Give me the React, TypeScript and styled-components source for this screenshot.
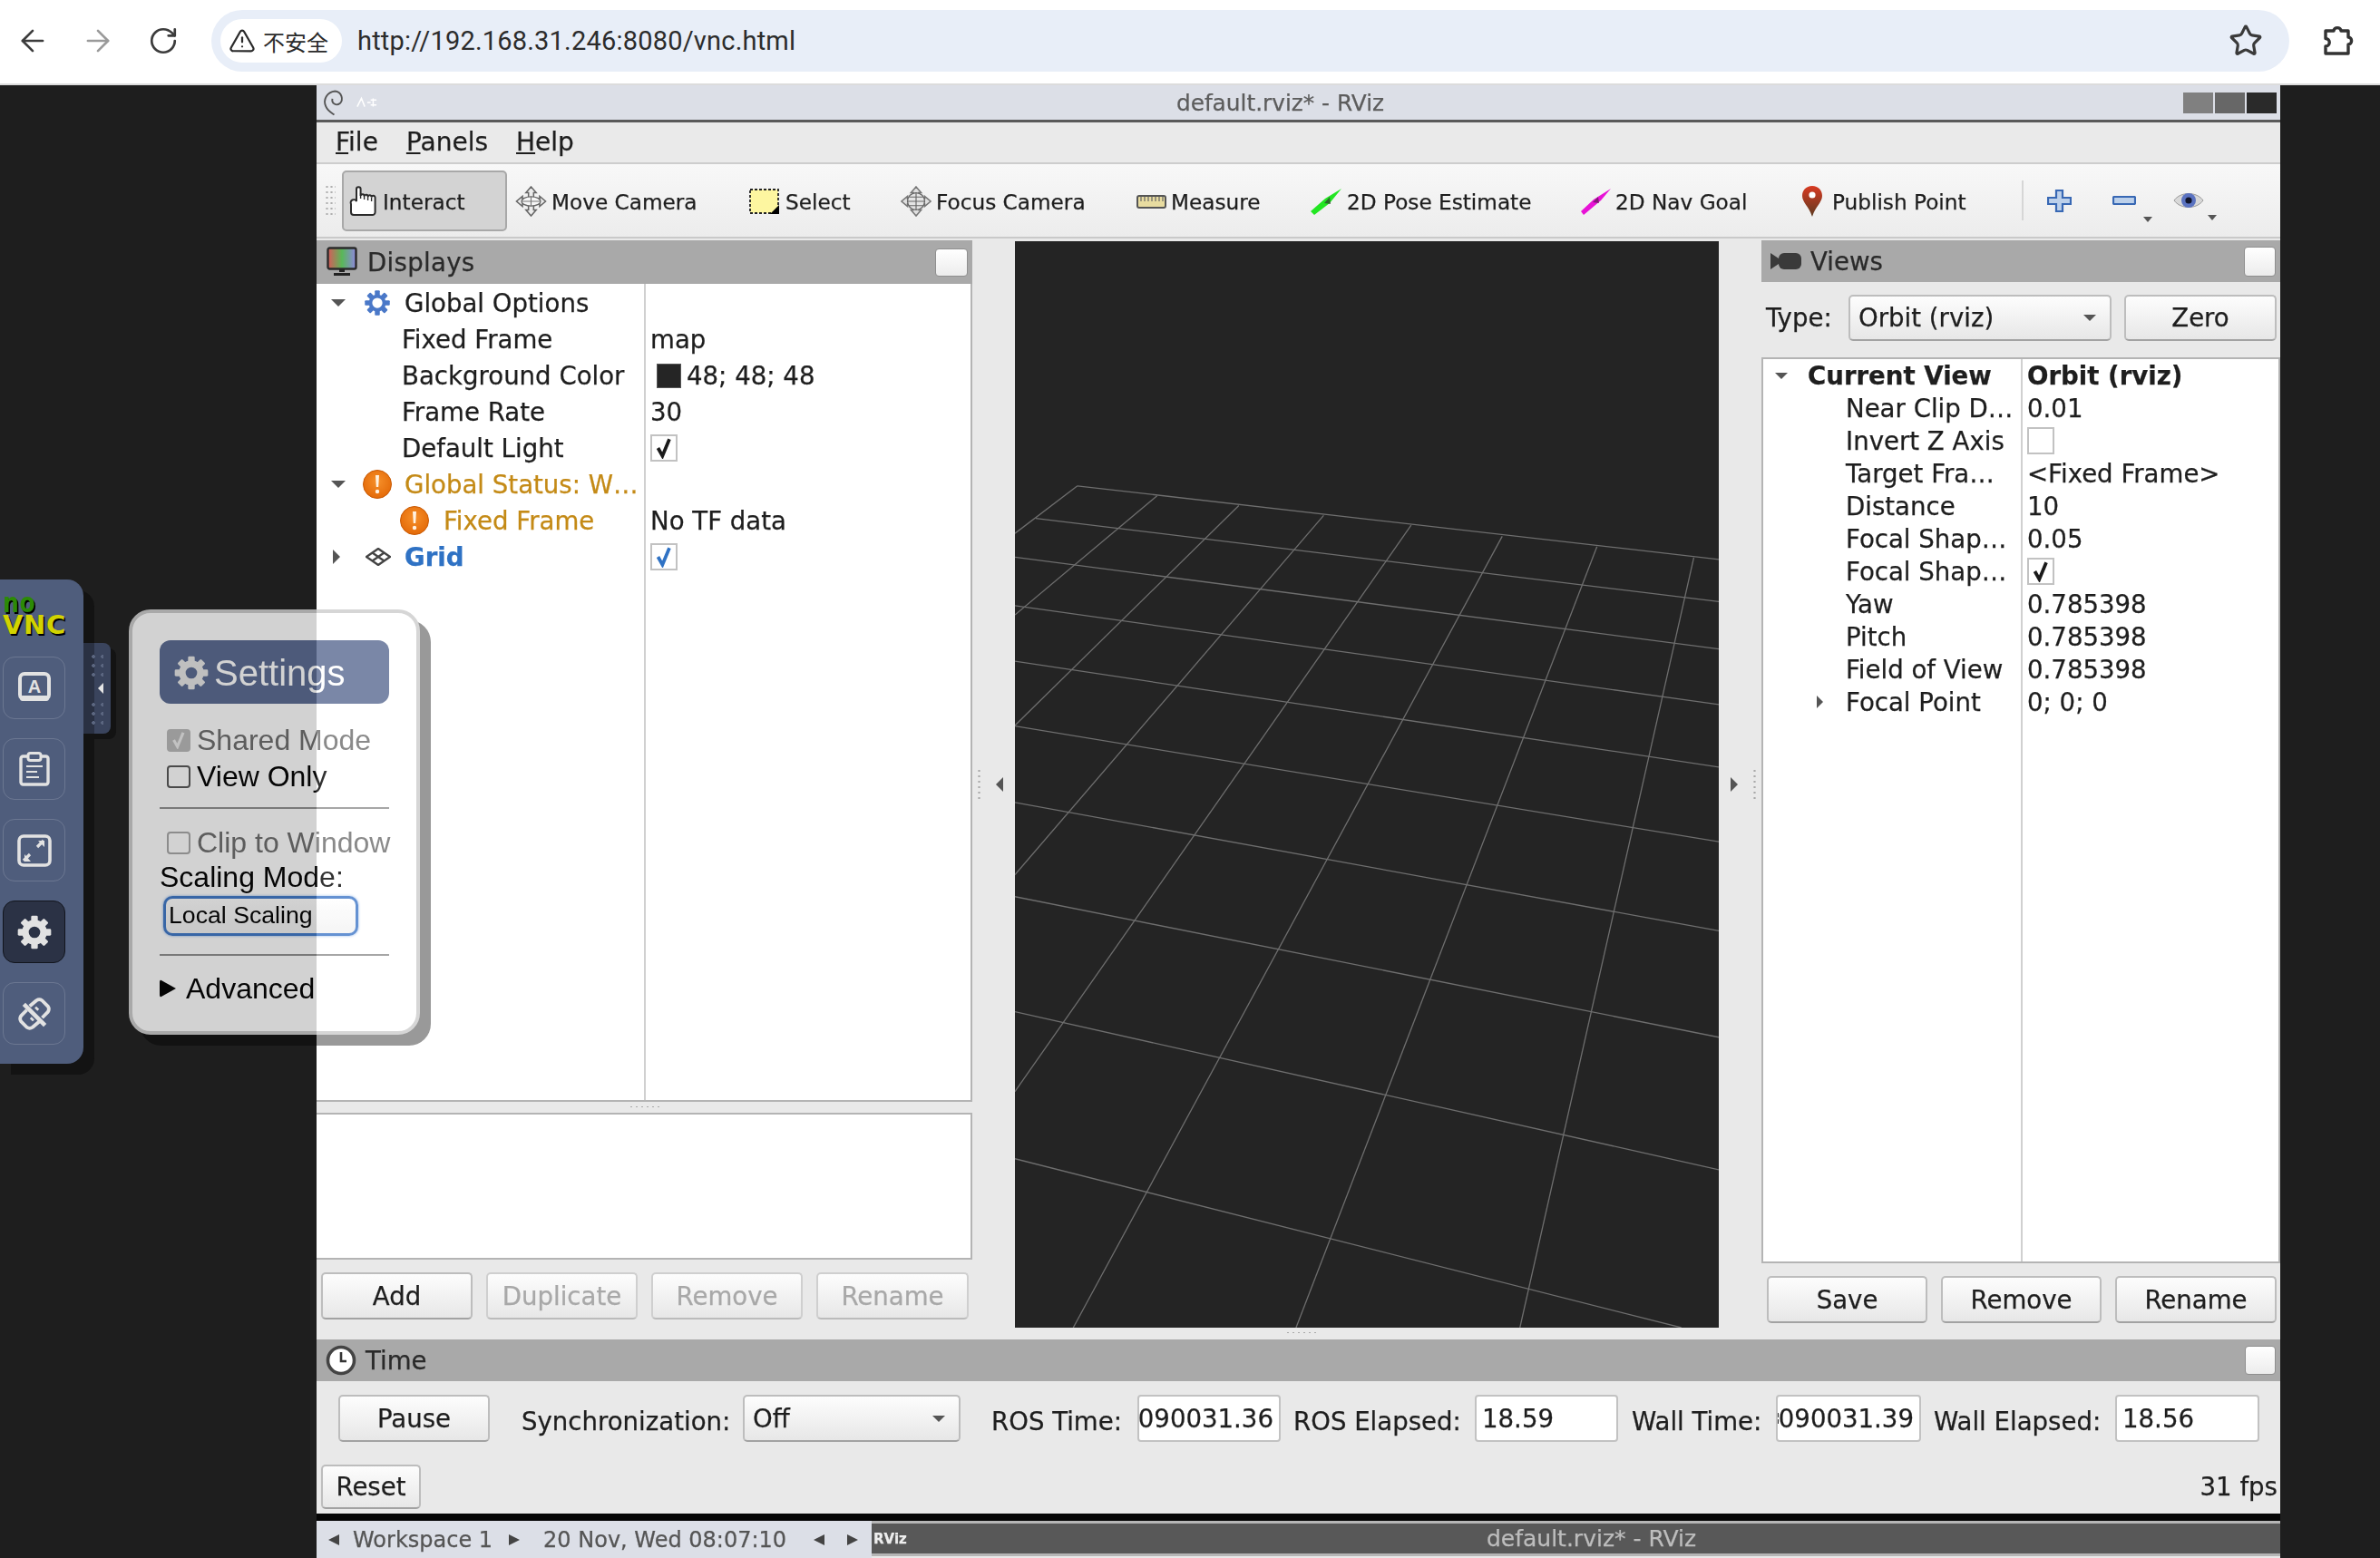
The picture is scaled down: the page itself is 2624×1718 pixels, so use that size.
import React from 'react';
import styled, { createGlobalStyle } from 'styled-components';
import { ArrowLeft, ArrowRight, RotateCw, Star, TriangleAlert } from 'lucide-react';

const GlobalStyle = createGlobalStyle`
  html, body {
    margin: 0;
    background: #1e1e1e;
    width: 2624px;
    height: 1718px;
    overflow: hidden;
  }
  * { box-sizing: border-box; }
`;

const Page = styled.div`
  width: 2624px;
  height: 1718px;
  display: flex;
  flex-direction: column;
`;

/* ---------- browser chrome ---------- */

const BrowserBar = styled.div`
  height: 94px;
  flex: none;
  background: #fff;
  border-bottom: 2px solid #dcdcdc;
  display: flex;
  align-items: center;
  padding-bottom: 2px;
`;

const NavSlot = styled.div<{ $dim?: boolean }>`
  width: 72px;
  display: flex;
  justify-content: center;
  color: ${p => (p.$dim ? '#9a9a9a' : '#3c3c3c')};
`;

const UrlPill = styled.div`
  width: 2291px;
  height: 68px;
  margin-left: 17px;
  border-radius: 34px;
  background: #e8eef8;
  display: flex;
  align-items: center;
  padding-left: 10px;
`;

const SecurityChip = styled.div`
  width: 134px;
  height: 48px;
  border-radius: 24px;
  background: #fff;
  display: flex;
  align-items: center;
  gap: 8px;
  padding-left: 9px;
  color: #2a2a2a;
  font: 24px 'Noto Sans CJK SC', sans-serif;
`;

const UrlText = styled.div`
  margin-left: 17px;
  font: 29px Roboto, sans-serif;
  color: #2c2c2c;
  letter-spacing: 0.2px;
`;

const StarSlot = styled.div`
  margin-left: auto;
  margin-right: 29px;
  color: #3a3a3a;
  display: flex;
`;

const PuzzleSlot = styled.div`
  margin-left: 37px;
  display: flex;
`;

/* ---------- desktop ---------- */

const Desktop = styled.div`
  flex: 1;
  position: relative;
  background: #1e1e1e;
  padding-left: 349px;
`;

const RvizWindow = styled.div`
  width: 2165px;
  height: 1624px;
  background: #e9e9e9;
  display: flex;
  flex-direction: column;
  font: 27.6px 'DejaVu Sans', sans-serif;
  color: #1e1e1e;
  -webkit-text-stroke: 0.25px;
  filter: blur(0.55px);
`;

const TitleBar = styled.div`
  height: 41px;
  flex: none;
  background: #dcdfe7;
  border-bottom: 3px solid #5a5a5a;
  display: flex;
  align-items: center;
`;

const TitleLeft = styled.div`
  width: 67px;
  padding-left: 6px;
  display: flex;
  align-items: center;
  gap: 12px;
`;

const TitleText = styled.div`
  flex: 1;
  text-align: center;
  font-size: 24.8px;
  color: #5c5c5c;
`;

const WindowButtons = styled.div`
  width: 107px;
  display: flex;
  gap: 2px;
`;

const WindowButton = styled.div<{ $c: string }>`
  width: 33px;
  height: 23px;
  background: ${p => p.$c};
`;

const MenuBar = styled.div`
  height: 46px;
  flex: none;
  background: #eaeaea;
  border-bottom: 2px solid #cdcdcd;
  display: flex;
  align-items: center;
  gap: 31px;
  padding: 0 0 2px 21px;
  font-size: 28px;
`;

const ToolBar = styled.div`
  height: 82px;
  flex: none;
  background: linear-gradient(#f8f8f8, #ececec);
  border-bottom: 2px solid #c9c9c9;
  display: flex;
  align-items: center;
  font-size: 23.2px;
  padding-left: 9px;
`;

const Grip = styled.div`
  width: 12px;
  height: 36px;
  margin-right: 7px;
  background-image: radial-gradient(#b0b0b0 1px, transparent 1.2px);
  background-size: 5px 6px;
`;

const ToolItem = styled.div<{ $w: number; $active?: boolean }>`
  width: ${p => p.$w}px;
  height: 67px;
  padding-top: 2px;
  flex: none;
  display: flex;
  align-items: center;
  gap: 5px;
  ${p =>
    p.$active &&
    `
    background: #d3d3d3;
    border: 2px solid #a8a8a8;
    border-radius: 5px;
    margin-right: 9px;
    padding-left: 4px;
  `}
`;

const ToolIcon = styled.div<{ $w: number; $gap?: number }>`
  width: ${p => p.$w}px;
  flex: none;
  display: flex;
  justify-content: center;
  margin-right: ${p => p.$gap ?? 0}px;
`;

const ToolSep = styled.div`
  width: 2px;
  height: 44px;
  background: #d6d6d6;
  flex: none;
`;

const SmallTool = styled.div<{ $ml: number; $w: number }>`
  margin-left: ${p => p.$ml}px;
  width: ${p => p.$w}px;
  position: relative;
  flex: none;
  display: flex;
  justify-content: center;
`;

const DropMark = styled.div<{ $l: number; $t: number }>`
  position: absolute;
  left: ${p => p.$l}px;
  top: ${p => p.$t}px;
  width: 0;
  height: 0;
  border: 5px solid transparent;
  border-top: 6px solid #555;
`;

const Body = styled.div`
  height: 1214px;
  flex: none;
  display: flex;
  padding-top: 2px;
`;

const LeftColumn = styled.div`
  width: 723px;
  flex: none;
  display: flex;
  flex-direction: column;
`;

const RightColumn = styled.div`
  width: 572px;
  flex: none;
  display: flex;
  flex-direction: column;
`;

const MidColumn = styled.div`
  width: 776px;
  flex: none;
  padding-top: 1px;
  display: flex;
  flex-direction: column;
`;

const Gutter = styled.div<{ $flip?: boolean }>`
  width: 47px;
  flex: none;
  height: 1200px;
  display: flex;
  flex-direction: ${p => (p.$flip ? 'row-reverse' : 'row')};
  align-items: center;
  padding: 0 5px;
  gap: 16px;
`;

const GutterDots = styled.div`
  width: 5px;
  height: 36px;
  background-image: radial-gradient(#a9a9a9 1px, transparent 1.2px);
  background-size: 5px 6px;
`;

const RowDots = styled.div`
  width: 36px;
  height: 5px;
  background-image: radial-gradient(#a9a9a9 1px, transparent 1.2px);
  background-size: 6px 5px;
`;

const Arrow = styled.div<{ $dir: 'down' | 'right' | 'left'; $c?: string; $s?: number; $len?: number }>`
  width: 0;
  height: 0;
  flex: none;
  border-style: solid;
  border-color: transparent;
  ${p => {
    const s = p.$s ?? 8;
    const l = p.$len ?? s;
    const c = p.$c ?? '#555';
    if (p.$dir === 'down') return `border-width: ${l}px ${s}px 0 ${s}px; border-top-color: ${c};`;
    if (p.$dir === 'right') return `border-width: ${s}px 0 ${s}px ${l}px; border-left-color: ${c};`;
    return `border-width: ${s}px ${l}px ${s}px 0; border-right-color: ${c};`;
  }}
`;

const RenderView = styled.div`
  width: 776px;
  height: 1198px;
  flex: none;
  background: #242424;
  display: flex;
`;

const RenderFoot = styled.div`
  height: 13px;
  padding: 3px 0 0 298px;
`;

const DockHeader = styled.div<{ $h: number }>`
  height: ${p => p.$h}px;
  flex: none;
  background: #a9a9a9;
  display: flex;
  align-items: center;
  padding-right: 5px;
  font-size: 27.6px;
  color: #2a2a2a;
`;

const DockIcon = styled.div<{ $w: number }>`
  width: ${p => p.$w}px;
  flex: none;
  display: flex;
  justify-content: center;
`;

const DockTitle = styled.div<{ $spread?: number }>`
  letter-spacing: ${p => p.$spread ?? 0}px;
`;

const FloatButton = styled.div<{ $w: number; $h: number }>`
  margin-left: auto;
  width: ${p => p.$w}px;
  height: ${p => p.$h}px;
  background: linear-gradient(#fff, #ececec);
  border: 1px solid #8f8f8f;
  border-radius: 4px;
`;

const Tree = styled.div<{ $col: number; $top?: boolean }>`
  background: linear-gradient(
    to right,
    transparent ${p => p.$col}px,
    #d0d0d0 ${p => p.$col}px,
    #d0d0d0 ${p => p.$col + 2}px,
    transparent ${p => p.$col + 2}px
  ), #fff;
  border: 2px solid #b4b4b4;
  border-left: ${p => (p.$top ? '2px solid #b4b4b4' : '0')};
  border-top: ${p => (p.$top ? '2px solid #b4b4b4' : '0')};
  flex: none;
`;

const LeftTree = styled(Tree)`
  height: 902px;
  padding-top: 1px;
`;

const RightTree = styled(Tree)`
  height: 999px;
  margin-top: 18px;
`;

const TreeRow = styled.div<{ $h: number; $col: number }>`
  height: ${p => p.$h}px;
  display: grid;
  grid-template-columns: ${p => p.$col}px 1fr;
  align-items: center;
`;

const NameCell = styled.div<{ $pad?: number; $kind?: 'warn' | 'link' | 'bold' }>`
  display: flex;
  align-items: center;
  padding-left: ${p => p.$pad ?? 0}px;
  white-space: nowrap;
  color: ${p => (p.$kind === 'warn' ? '#c48a16' : p.$kind === 'link' ? '#2f72c4' : '#1e1e1e')};
  font-weight: ${p => (p.$kind === 'link' || p.$kind === 'bold' ? 700 : 400)};
`;

const ArrowSlot = styled.div<{ $w: number; $pad: number }>`
  width: ${p => p.$w}px;
  padding-left: ${p => p.$pad}px;
  flex: none;
  display: flex;
`;

const IconSlot = styled.div<{ $w: number }>`
  width: ${p => p.$w}px;
  flex: none;
  display: flex;
`;

const ValueCell = styled.div<{ $pad: number; $bold?: boolean }>`
  padding-left: ${p => p.$pad}px;
  display: flex;
  align-items: center;
  gap: 6px;
  white-space: nowrap;
  font-weight: ${p => (p.$bold ? 700 : 400)};
`;

const Swatch = styled.div`
  width: 27px;
  height: 27px;
  margin-left: 7px;
  background: #252525;
  border: 1px solid #555;
`;

const CheckBox = styled.div<{ $c?: string }>`
  width: 30px;
  height: 30px;
  background: #fff;
  border: 2px solid #c2c2c2;
  display: flex;
  align-items: center;
  justify-content: center;
  color: ${p => p.$c ?? '#1a1a1a'};
`;

const DockSplit = styled.div`
  height: 12px;
  flex: none;
  display: flex;
  justify-content: center;
  padding: 3px 0 0 0;
`;

const StatusBox = styled.div`
  height: 162px;
  flex: none;
  background: #fff;
  border: 2px solid #b4b4b4;
  border-left: 0;
`;

const ButtonRow = styled.div<{ $top: number; $pad: number; $gap: number }>`
  display: flex;
  gap: ${p => p.$gap}px;
  margin-top: ${p => p.$top}px;
  padding-left: ${p => p.$pad}px;
`;

const QtButton = styled.div<{ $w: number; $h?: number; $off?: boolean; $ml?: number }>`
  width: ${p => p.$w}px;
  height: ${p => p.$h ?? 52}px;
  flex: none;
  margin-left: ${p => p.$ml ?? 0}px;
  display: flex;
  align-items: center;
  justify-content: center;
  background: linear-gradient(#fdfdfd, #e7e7e7);
  border: 2px solid ${p => (p.$off ? '#cfcfcf' : '#bdbdbd')};
  border-bottom-color: ${p => (p.$off ? '#bbb' : '#a2a2a2')};
  border-radius: 5px;
  color: ${p => (p.$off ? '#a8a8a8' : '#1e1e1e')};
`;

const Combo = styled.div<{ $w: number; $h?: number; $ml?: number }>`
  width: ${p => p.$w}px;
  height: ${p => p.$h ?? 52}px;
  flex: none;
  margin-left: ${p => p.$ml ?? 0}px;
  display: flex;
  align-items: center;
  justify-content: space-between;
  padding: 0 15px 0 9px;
  background: linear-gradient(#fdfdfd, #e7e7e7);
  border: 2px solid #bdbdbd;
  border-bottom-color: #a2a2a2;
  border-radius: 5px;
`;

const TypeRow = styled.div`
  height: 51px;
  margin-top: 14px;
  display: flex;
  align-items: center;
  padding-left: 5px;
`;

const TypeLabel = styled.div`
  width: 91px;
  flex: none;
`;

const TimeBody = styled.div`
  flex: 1;
  display: flex;
  flex-direction: column;
`;

const TimeRow = styled.div`
  display: flex;
  align-items: center;
  margin-top: 15px;
  padding-left: 24px;
`;

const TimeFoot = styled.div`
  display: flex;
  align-items: center;
  justify-content: space-between;
  margin-top: 25px;
  padding: 0 3px 0 5px;
`;

const FieldLabel = styled.div<{ $w: number; $ml: number }>`
  width: ${p => p.$w}px;
  margin-left: ${p => p.$ml}px;
  flex: none;
  white-space: nowrap;
  padding-top: 6px;
`;

const TimeField = styled.div<{ $w: number; $ml: number; $end?: boolean }>`
  width: ${p => p.$w}px;
  height: 52px;
  margin-left: ${p => p.$ml}px;
  flex: none;
  overflow: hidden;
  display: flex;
  align-items: center;
  white-space: nowrap;
  justify-content: ${p => (p.$end ? 'flex-end' : 'flex-start')};
  padding: ${p => (p.$end ? '0 6px 0 0' : '0 6px')};
  background: #fff;
  border: 2px solid #c2c2c2;
  border-radius: 4px;
`;

const ClipMark = styled.div`
  width: 3px;
  height: 14px;
  margin-right: auto;
  background-image: radial-gradient(#333 1.3px, transparent 1.5px);
  background-size: 3px 7px;
`;

const BlackStrip = styled.div`
  height: 8px;
  flex: none;
  background: #050505;
`;

const Taskbar = styled.div`
  height: 41px;
  flex: none;
  display: flex;
  font-size: 24px;
`;

const TaskLeft = styled.div`
  width: 612px;
  flex: none;
  background: #dcdfe7;
  color: #555;
  display: flex;
  align-items: center;
  padding-left: 13px;
`;

const TaskPart = styled.div<{ $ml: number }>`
  margin-left: ${p => p.$ml}px;
  white-space: nowrap;
`;

const TaskArrow = styled(Arrow)<{ $ml: number }>`
  margin-left: ${p => p.$ml}px;
`;

const TaskRight = styled.div`
  flex: 1;
  position: relative;
  background: #585858;
  border-top: 3px solid #b5b5b5;
  border-bottom: 3px solid #b5b5b5;
  margin-bottom: 2px;
  color: #bdbdbd;
  display: flex;
  align-items: center;
  font-size: 25px;
`;

const TaskIconText = styled.div`
  width: 40px;
  flex: none;
  padding-left: 2px;
  color: #eee;
  font-size: 15px;
  font-weight: 700;
`;

const TaskTitle = styled.div`
  flex: 1;
  text-align: center;
  padding-right: 6px;
`;

/* ---------- noVNC overlay ---------- */

const VncBar = styled.div`
  position: absolute;
  left: 0;
  top: 545px;
  width: 92px;
  height: 534px;
  background: #4f5d7c;
  border-radius: 0 18px 18px 0;
  box-shadow: 12px 12px 0 #131313;
  padding: 17px 0 0 3px;
  display: flex;
  flex-direction: column;
`;

const VncLogo = styled.div`
  height: 68px;
  font: 700 29px/22px 'DejaVu Sans', sans-serif;
  color: #d2d300;
  text-shadow: 1.5px 1.5px 0 #000;
  letter-spacing: 0.6px;
`;

const LogoNo = styled.div`
  color: #2c8a06;
  height: 22px;
  font-size: 25px;
  transform: scaleY(1.2);
  transform-origin: 0 20px;
`;

const VncButton = styled.div<{ $on?: boolean }>`
  width: 69px;
  height: 69px;
  margin-bottom: 21px;
  display: flex;
  align-items: center;
  justify-content: center;
  border-radius: 13px;
  color: #e2e2e2;
  background: ${p => (p.$on ? '#2b3245' : 'transparent')};
  border: 1.5px solid ${p => (p.$on ? '#12151d' : 'rgba(255,255,255,0.16)')};
`;

const VncHandle = styled.div`
  position: absolute;
  left: 92px;
  top: 70px;
  width: 30px;
  height: 100px;
  border-radius: 0 8px 8px 0;
  background: linear-gradient(to right, #2a3143 12px, #3a445d 12px);
  box-shadow: 6px 6px 0 #131313;
  display: flex;
  flex-direction: column;
  align-items: flex-end;
  justify-content: center;
  padding-right: 8px;
  gap: 7px;
`;

const HandleDots = styled.div`
  width: 16px;
  height: 27px;
  background-image: radial-gradient(#5b6680 1.8px, transparent 2px);
  background-size: 10px 10px;
`;

const VncPanel = styled.div`
  position: absolute;
  left: 142px;
  top: 578px;
  width: 321px;
  height: 469px;
  background: #fff;
  border: 4px solid #ccc;
  border-radius: 24px;
  box-shadow: 12px 12px 0 rgba(0, 0, 0, 0.5);
  opacity: 0.8;
  padding: 30px 30px 0 30px;
  font: 32px 'Liberation Sans', Arial, sans-serif;
  color: #000;
`;

const PanelHeading = styled.div`
  height: 70px;
  border-radius: 12px;
  background: #596a92;
  color: #fff;
  font-size: 40px;
  display: flex;
  align-items: center;
  padding: 2px 0 0 15px;
  gap: 5px;
  margin-bottom: 20px;
`;

const CheckRow = styled.div<{ $off?: boolean }>`
  height: 40px;
  display: flex;
  align-items: center;
  padding-left: 8px;
  gap: 7px;
  white-space: nowrap;
  color: ${p => (p.$off ? '#6d6d6d' : '#000')};
`;

const PanelCheck = styled.div<{ $state: 'checkedOff' | 'plain' | 'off' }>`
  width: 26px;
  height: 25px;
  flex: none;
  border-radius: 4px;
  display: flex;
  align-items: center;
  justify-content: center;
  color: #ececec;
  background: ${p => (p.$state === 'checkedOff' ? '#bababa' : 'transparent')};
  border: 2px solid
    ${p => (p.$state === 'plain' ? '#555' : p.$state === 'off' ? '#a8a8a8' : '#bababa')};
`;

const PanelRule = styled.div<{ $mt: number; $mb: number }>`
  height: 2px;
  background: #909090;
  margin-top: ${p => p.$mt}px;
  margin-bottom: ${p => p.$mb}px;
`;

const ScaleLabel = styled.div`
  height: 36px;
  line-height: 36px;
`;

const ScaleSelect = styled.div`
  width: 215px;
  height: 44px;
  margin: 3px 0 0 4px;
  border: 3px solid #3f78c8;
  border-radius: 10px;
  background: linear-gradient(#fff, #f3f3f3);
  font-size: 26.67px;
  line-height: 36px;
  padding-left: 3px;
  box-shadow: 0 0 3px #7aa6e6;
`;

const AdvancedRow = styled.div`
  height: 40px;
  display: flex;
  align-items: center;
  gap: 11px;
`;

const AdvancedMark = styled.div`
  width: 0;
  height: 0;
  border-style: solid;
  border-width: 10px 0 10px 18px;
  border-color: transparent transparent transparent #000;
  border-radius: 3px;
`;

/* ---------- drawings ---------- */

function Gear({ size, color, ring = 4.4 }: { size: number; color: string; ring?: number }) {
  const teeth = [0, 45, 90, 135, 180, 225, 270, 315];
  return (
    <svg width={size} height={size} viewBox="0 0 24 24">
      {teeth.map(a => (
        <rect key={a} x="9.8" y="1" width="4.4" height="5" rx="0.8" fill={color} transform={`rotate(${a} 12 12)`} />
      ))}
      <circle cx="12" cy="12" r="6" fill="none" stroke={color} strokeWidth={ring} />
    </svg>
  );
}

function WarnDot({ size }: { size: number }) {
  return (
    <svg width={size} height={size} viewBox="0 0 32 32">
      <defs>
        <radialGradient id="warnfill" cx="50%" cy="40%" r="60%">
          <stop offset="0" stopColor="#f6902a" />
          <stop offset="1" stopColor="#e46a08" />
        </radialGradient>
      </defs>
      <ellipse cx="16" cy="16" rx="15.5" ry="15.5" fill="url(#warnfill)" stroke="#c85a06" />
      <path d="M14 6h4l-.8 13h-2.4z" fill="#fff2e2" />
      <circle cx="16" cy="24" r="2.2" fill="#fff2e2" />
    </svg>
  );
}

function Tick({ size = 24 }: { size?: number }) {
  return (
    <svg width={size} height={size} viewBox="0 0 22 22">
      <path d="M5 11 L9.5 19 L16.5 2" fill="none" stroke="currentColor" strokeWidth="3.4" />
    </svg>
  );
}

function GridIcon() {
  return (
    <svg width="28" height="20" viewBox="0 0 28 20">
      <path d="M14 1 L27 10 L14 19 L1 10Z M7.5 5.5 L20.5 14.5 M20.5 5.5 L7.5 14.5" fill="none" stroke="#444" strokeWidth="2.4" />
    </svg>
  );
}

function MonitorIcon() {
  return (
    <svg width="34" height="34" viewBox="0 0 34 34">
      <defs>
        <linearGradient id="rgbscreen">
          <stop offset="0" stopColor="#d85a5a" />
          <stop offset="0.5" stopColor="#58b858" />
          <stop offset="1" stopColor="#8f86e0" />
        </linearGradient>
      </defs>
      <rect x="1.5" y="1.5" width="31" height="23" rx="2" fill="url(#rgbscreen)" stroke="#2a2a2a" strokeWidth="2.4" />
      <path d="M14 25h6v3h-6z M8 29h18v3H8z" fill="#222" />
    </svg>
  );
}

function CameraIcon() {
  return (
    <svg width="34" height="24" viewBox="0 0 34 24">
      <path d="M0 3 L9 9 V15 L0 21Z" fill="#3a3a3a" />
      <rect x="9" y="3" width="25" height="18" rx="6" fill="#3a3a3a" />
    </svg>
  );
}

function ClockIcon() {
  return (
    <svg width="34" height="34" viewBox="0 0 34 34">
      <circle cx="17" cy="17" r="14.5" fill="#fff" stroke="#444" strokeWidth="3.6" />
      <path d="M17 8v10h6" fill="none" stroke="#333" strokeWidth="2.6" />
    </svg>
  );
}

function SwirlIcon() {
  return (
    <svg width="27" height="30" viewBox="0 0 24 28" fill="none" stroke="#555" strokeWidth="1.8">
      <path d="M14 2 C5 3 1 11 4 18 C6 23 10 25 13 27 M14 2 C21 3 23 11 19 15 C15 18 10 15 11 10" />
    </svg>
  );
}

function StickyGlyph() {
  return (
    <svg width="26" height="14" viewBox="0 0 26 14" fill="none" stroke="#fff" strokeWidth="1.6">
      <path d="M2 12 L7 2 L11 12 M14 7h4 M21 2v10 M18 4h7 M18 10h7" />
    </svg>
  );
}

const ARROW_CROSS = 'M18 1 L24 8 H21 V15 H28 V12 L35 18 L28 24 V21 H21 V28 H24 L18 35 L12 28 H15 V21 H8 V24 L1 18 L8 12 V15 H15 V8 H12 Z';

function HandIcon() {
  return (
    <svg width="34" height="34" viewBox="0 0 34 34">
      <path
        d="M10 17 V3.5 a2.3 2.3 0 0 1 4.6 0 V11 a2 2 0 0 1 4 .5 a2 2 0 0 1 4 .5 a2 2 0 0 1 4 .7 a2 2 0 0 1 4 .3 V29 a3 3 0 0 1 -3 3 H7 a3 3 0 0 1 -3 -3 V20 a3 3 0 0 1 6 -3z"
        fill="#fff"
        stroke="#2a2a2a"
        strokeWidth="2"
      />
      <path d="M14.6 8v6 M18.6 11v4 M22.6 12v4 M26.6 13v4" stroke="#2a2a2a" strokeWidth="1.4" />
    </svg>
  );
}

function MoveIcon() {
  return (
    <svg width="35" height="34" viewBox="0 0 36 36">
      <path d={ARROW_CROSS} fill="#ececec" stroke="#666" strokeWidth="1.6" />
      <ellipse cx="18" cy="18" rx="11" ry="5.5" fill="#f6f6f6" stroke="#666" strokeWidth="1.4" />
      <path d="M7 18h22 M18 12.5v11" stroke="#777" strokeWidth="1.2" />
    </svg>
  );
}

function SelectIcon() {
  return (
    <svg width="33" height="28" viewBox="0 0 33 28">
      <rect x="1" y="1" width="31" height="26" fill="#fdf6a0" stroke="#222" strokeWidth="1.8" strokeDasharray="3 2" />
      <path d="M33 18 V28 H23Z" fill="#000" />
    </svg>
  );
}

function FocusIcon() {
  return (
    <svg width="34" height="36" viewBox="0 0 36 36">
      <path d={ARROW_CROSS} fill="#dfdfdf" stroke="#777" strokeWidth="1.6" />
      <circle cx="18" cy="18" r="10" fill="#e4e4e4" stroke="#666" strokeWidth="1.4" />
      <path d="M8 18h20 M18 8v20 M10 13h16 M10 23h16" stroke="#666" strokeWidth="1.2" />
    </svg>
  );
}

function RulerIcon() {
  return (
    <svg width="33" height="15" viewBox="0 0 33 15">
      <rect x="1" y="1" width="31" height="13" rx="2" fill="#e8dca0" stroke="#555" strokeWidth="2" />
      <path d="M5 2v5 M9 2v5 M13 2v5 M17 2v5 M21 2v5 M25 2v5 M29 2v5" stroke="#666" strokeWidth="1.2" />
    </svg>
  );
}

function SlashArrow({ fill }: { fill: string }) {
  return (
    <svg width="35" height="29" viewBox="0 0 35 29">
      <path d="M34 0 L21 16 L4 29 L0 25 L16 11Z" fill={fill} />
      <path d="M21 9 L22 17 L15 16Z" fill="#2f4f2f" opacity="0.8" />
    </svg>
  );
}

function NavArrow() {
  return (
    <svg width="33" height="29" viewBox="0 0 33 29">
      <path d="M33 0 L22 13 L3 29 L0 25 L14 12Z" fill="#e812d6" />
      <path d="M19 9 L20 16 L13 15Z" fill="#5a1a50" opacity="0.7" />
    </svg>
  );
}

function PinIcon() {
  return (
    <svg width="24" height="34" viewBox="0 0 24 34">
      <defs>
        <linearGradient id="pinfill" x1="0" x2="0" y1="0" y2="1">
          <stop offset="0" stopColor="#d83a22" />
          <stop offset="1" stopColor="#5c3a20" />
        </linearGradient>
      </defs>
      <path d="M12 0 C5 0 1 5 1 11 C1 18 8 22 12 34 C16 22 23 18 23 11 C23 5 19 0 12 0Z" fill="url(#pinfill)" />
      <circle cx="12" cy="10" r="3.6" fill="#fff" />
    </svg>
  );
}

function PlusIcon() {
  return (
    <svg width="27" height="25" viewBox="0 0 27 25">
      <path d="M10 1h7v8h9v7h-9v8h-7v-8H1V9h9z" fill="#bcd0ea" stroke="#3868b4" strokeWidth="2.2" />
    </svg>
  );
}

function MinusIcon() {
  return (
    <svg width="26" height="10" viewBox="0 0 26 10">
      <rect x="1" y="1" width="24" height="8" rx="1" fill="#bcd0ea" stroke="#3868b4" strokeWidth="2.2" />
    </svg>
  );
}

function EyeIcon() {
  return (
    <svg width="34" height="22" viewBox="0 0 34 22">
      <path d="M1 11 C8 1 26 1 33 11 C26 21 8 21 1 11Z" fill="#d8d8d8" stroke="#9a9a9a" strokeWidth="1" />
      <circle cx="17" cy="11" r="8" fill="#5a72c0" />
      <circle cx="17" cy="11" r="3.6" fill="#10142a" />
    </svg>
  );
}

function PuzzleIcon() {
  return (
    <svg width="36" height="34" viewBox="0 0 36 34" fill="none" stroke="#333" strokeWidth="3.4" strokeLinejoin="round">
      <path d="M3 6 H12 A4 3.4 0 0 1 20 6 H28 V13 A3.6 4 0 0 1 28 21 V31 H3 V23 A4 4 0 0 0 3 14.5 Z" />
    </svg>
  );
}

function KeysIcon() {
  return (
    <svg width="36" height="34" viewBox="0 0 36 34">
      <rect x="2" y="2" width="32" height="28" rx="5" fill="none" stroke="currentColor" strokeWidth="4" />
      <rect x="2" y="26" width="32" height="6" rx="3" fill="currentColor" />
      <text x="18" y="23" textAnchor="middle" fontFamily="Liberation Sans" fontWeight="700" fontSize="20" fill="currentColor">A</text>
    </svg>
  );
}

function ClipIcon() {
  return (
    <svg width="34" height="38" viewBox="0 0 34 38" fill="none" stroke="currentColor">
      <rect x="2" y="5" width="30" height="31" rx="2.5" strokeWidth="3.4" />
      <rect x="10" y="1.5" width="14" height="8" rx="2.5" strokeWidth="3" fill="#4f5d7c" />
      <path d="M8 16h18 M8 22h12 M8 28h14" strokeWidth="2" />
    </svg>
  );
}

function ScreenIcon() {
  return (
    <svg width="38" height="36" viewBox="0 0 38 36" fill="none" stroke="currentColor">
      <rect x="2" y="2" width="34" height="32" rx="5" strokeWidth="3.6" />
      <path d="M22 14 L29 7 M7 29 L14 22" strokeWidth="3.2" />
      <path d="M23 7 H30 V14Z M8 22 V30 H15Z" fill="currentColor" stroke="none" />
    </svg>
  );
}

function BrokenLinkIcon() {
  return (
    <svg width="38" height="38" viewBox="0 0 36 36" fill="none" stroke="currentColor" strokeWidth="3.6" strokeLinejoin="round">
      <path d="M13 10 L20 4 Q23 2 26 4 L32 10 Q34 13 32 16 L26 22" />
      <path d="M23 26 L16 32 Q13 34 10 32 L4 26 Q2 23 4 20 L10 14" />
      <path d="M7 8 L29 30" strokeWidth="4.4" />
      <path d="M19 11 L22 14 M14 22 L17 25" strokeWidth="2.6" />
    </svg>
  );
}

/* ---------- grid floor, in the coordinates of a 1352x1878 trace ---------- */

const FLOOR_LINES = [
  [240, 88, 1472, 215], [160, 144, 1472, 288], [120, 211, 1472, 370], [120, 295, 1472, 466],
  [120, 391, 1472, 574], [120, 503, 1472, 703], [120, 635, 1472, 857], [120, 798, 1472, 1041],
  [120, 997, 1472, 1270], [120, 1251, 1400, 1543],
  [240, 88, 120, 170], [393, 105, 120, 311], [550, 122, 120, 502], [713, 139, 120, 760],
  [881, 156, 120, 1135], [1056, 175, 232, 1543], [1238, 193, 660, 1543], [1424, 212, 1090, 1543],
];

function Floor() {
  return (
    <svg width="776" height="1198" viewBox="120 -335 1352 1878" preserveAspectRatio="none">
      {FLOOR_LINES.map(([x1, y1, x2, y2]) => (
        <line
          key={`${x1}-${y1}-${x2}`}
          x1={x1}
          y1={y1}
          x2={x2}
          y2={y2}
          stroke="#6e6e6e"
          strokeWidth="1.3"
          vectorEffect="non-scaling-stroke"
        />
      ))}
    </svg>
  );
}

const VIEW_ROWS: [string, string][] = [
  ['Near Clip D…', '0.01'],
  ['Invert Z Axis', ''],
  ['Target Fra…', '<Fixed Frame>'],
  ['Distance', '10'],
  ['Focal Shap…', '0.05'],
  ['Focal Shap…', 'tick'],
  ['Yaw', '0.785398'],
  ['Pitch', '0.785398'],
  ['Field of View', '0.785398'],
];

export default function App() {
  return (
    <Page>
      <GlobalStyle />
      <BrowserBar>
        <NavSlot><ArrowLeft size={38} strokeWidth={1.7} /></NavSlot>
        <NavSlot $dim><ArrowRight size={38} strokeWidth={1.7} /></NavSlot>
        <NavSlot><RotateCw size={34} strokeWidth={1.9} /></NavSlot>
        <UrlPill>
          <SecurityChip>
            <TriangleAlert size={30} strokeWidth={1.8} />
            不安全
          </SecurityChip>
          <UrlText>http://192.168.31.246:8080/vnc.html</UrlText>
          <StarSlot><Star size={38} strokeWidth={2} /></StarSlot>
        </UrlPill>
        <PuzzleSlot><PuzzleIcon /></PuzzleSlot>
      </BrowserBar>

      <Desktop>
        <RvizWindow>
          <TitleBar>
            <TitleLeft>
              <SwirlIcon />
              <StickyGlyph />
            </TitleLeft>
            <TitleText>default.rviz* - RViz</TitleText>
            <WindowButtons>
              <WindowButton $c="#808080" />
              <WindowButton $c="#676767" />
              <WindowButton $c="#2a2a2a" />
            </WindowButtons>
          </TitleBar>

          <MenuBar>
            <span><u>F</u>ile</span>
            <span><u>P</u>anels</span>
            <span><u>H</u>elp</span>
          </MenuBar>

          <ToolBar>
            <Grip />
            <ToolItem $w={182} $active>
              <ToolIcon $w={34}><HandIcon /></ToolIcon>
              Interact
            </ToolItem>
            <ToolItem $w={258}><ToolIcon $w={35}><MoveIcon /></ToolIcon>Move Camera</ToolItem>
            <ToolItem $w={167}><ToolIcon $w={33} $gap={2}><SelectIcon /></ToolIcon>Select</ToolItem>
            <ToolItem $w={260}><ToolIcon $w={34}><FocusIcon /></ToolIcon>Focus Camera</ToolItem>
            <ToolItem $w={192}><ToolIcon $w={33}><RulerIcon /></ToolIcon>Measure</ToolItem>
            <ToolItem $w={298}><ToolIcon $w={35}><SlashArrow fill="#22e622" /></ToolIcon>2D Pose Estimate</ToolItem>
            <ToolItem $w={243}><ToolIcon $w={33}><NavArrow /></ToolIcon>2D Nav Goal</ToolItem>
            <ToolItem $w={243}><ToolIcon $w={24} $gap={5}><PinIcon /></ToolIcon>Publish Point</ToolItem>
            <ToolSep />
            <SmallTool $ml={26} $w={27}><PlusIcon /></SmallTool>
            <SmallTool $ml={45} $w={26}>
              <MinusIcon />
              <DropMark $l={34} $t={23} />
            </SmallTool>
            <SmallTool $ml={41} $w={34}>
              <EyeIcon />
              <DropMark $l={38} $t={27} />
            </SmallTool>
          </ToolBar>

          <Body>
            <LeftColumn>
              <DockHeader $h={48}>
                <DockIcon $w={56}><MonitorIcon /></DockIcon>
                <DockTitle $spread={0.3}>Displays</DockTitle>
                <FloatButton $w={36} $h={31} />
              </DockHeader>
              <LeftTree $col={361}>
                <TreeRow $h={40} $col={361}>
                  <NameCell>
                    <ArrowSlot $w={52} $pad={16}><Arrow $dir="down" /></ArrowSlot>
                    <IconSlot $w={45}><Gear size={30} color="#4a78c8" ring={3} /></IconSlot>
                    Global Options
                  </NameCell>
                  <ValueCell $pad={7} />
                </TreeRow>
                <TreeRow $h={40} $col={361}>
                  <NameCell $pad={94}>Fixed Frame</NameCell>
                  <ValueCell $pad={7}>map</ValueCell>
                </TreeRow>
                <TreeRow $h={40} $col={361}>
                  <NameCell $pad={94}>Background Color</NameCell>
                  <ValueCell $pad={7}><Swatch />48; 48; 48</ValueCell>
                </TreeRow>
                <TreeRow $h={40} $col={361}>
                  <NameCell $pad={94}>Frame Rate</NameCell>
                  <ValueCell $pad={7}>30</ValueCell>
                </TreeRow>
                <TreeRow $h={40} $col={361}>
                  <NameCell $pad={94}>Default Light</NameCell>
                  <ValueCell $pad={7}><CheckBox><Tick /></CheckBox></ValueCell>
                </TreeRow>
                <TreeRow $h={40} $col={361}>
                  <NameCell $kind="warn">
                    <ArrowSlot $w={51} $pad={16}><Arrow $dir="down" /></ArrowSlot>
                    <IconSlot $w={46}><WarnDot size={32} /></IconSlot>
                    Global Status: W…
                  </NameCell>
                  <ValueCell $pad={7} />
                </TreeRow>
                <TreeRow $h={40} $col={361}>
                  <NameCell $pad={92} $kind="warn">
                    <IconSlot $w={48}><WarnDot size={32} /></IconSlot>
                    Fixed Frame
                  </NameCell>
                  <ValueCell $pad={7}>No TF data</ValueCell>
                </TreeRow>
                <TreeRow $h={40} $col={361}>
                  <NameCell $kind="link">
                    <ArrowSlot $w={54} $pad={18}><Arrow $dir="right" /></ArrowSlot>
                    <IconSlot $w={43}><GridIcon /></IconSlot>
                    Grid
                  </NameCell>
                  <ValueCell $pad={7}><CheckBox $c="#2f72c4"><Tick /></CheckBox></ValueCell>
                </TreeRow>
              </LeftTree>
              <DockSplit><RowDots /></DockSplit>
              <StatusBox />
              <ButtonRow $top={14} $pad={5} $gap={15}>
                <QtButton $w={167}>Add</QtButton>
                <QtButton $w={167} $off>Duplicate</QtButton>
                <QtButton $w={167} $off>Remove</QtButton>
                <QtButton $w={168} $off>Rename</QtButton>
              </ButtonRow>
            </LeftColumn>

            <Gutter>
              <GutterDots />
              <Arrow $dir="left" $s={8} />
            </Gutter>

            <MidColumn>
              <RenderView><Floor /></RenderView>
              <RenderFoot><RowDots /></RenderFoot>
            </MidColumn>

            <Gutter $flip>
              <GutterDots />
              <Arrow $dir="right" $s={8} />
            </Gutter>

            <RightColumn>
              <DockHeader $h={46}>
                <DockIcon $w={54}><CameraIcon /></DockIcon>
                <DockTitle>Views</DockTitle>
                <FloatButton $w={35} $h={33} />
              </DockHeader>
              <TypeRow>
                <TypeLabel>Type:</TypeLabel>
                <Combo $w={290} $h={51}>
                  Orbit (rviz)
                  <Arrow $dir="down" $s={7} />
                </Combo>
                <QtButton $w={168} $h={51} $ml={14}>Zero</QtButton>
              </TypeRow>
              <RightTree $col={284} $top>
                <TreeRow $h={36} $col={284}>
                  <NameCell $kind="bold">
                    <ArrowSlot $w={49} $pad={13}><Arrow $dir="down" $s={7} /></ArrowSlot>
                    Current View
                  </NameCell>
                  <ValueCell $pad={7} $bold>Orbit (rviz)</ValueCell>
                </TreeRow>
                {VIEW_ROWS.map(([name, value], i) => (
                  <TreeRow key={i} $h={36} $col={284}>
                    <NameCell $pad={91}>{name}</NameCell>
                    <ValueCell $pad={7}>
                      {value === '' ? <CheckBox /> : value === 'tick' ? <CheckBox><Tick /></CheckBox> : value}
                    </ValueCell>
                  </TreeRow>
                ))}
                <TreeRow $h={36} $col={284}>
                  <NameCell>
                    <ArrowSlot $w={91} $pad={59}><Arrow $dir="right" $s={7} /></ArrowSlot>
                    Focal Point
                  </NameCell>
                  <ValueCell $pad={7}>0; 0; 0</ValueCell>
                </TreeRow>
              </RightTree>
              <ButtonRow $top={14} $pad={6} $gap={15}>
                <QtButton $w={177}>Save</QtButton>
                <QtButton $w={177}>Remove</QtButton>
                <QtButton $w={178}>Rename</QtButton>
              </ButtonRow>
            </RightColumn>
          </Body>

          <DockHeader $h={46}>
            <DockIcon $w={54}><ClockIcon /></DockIcon>
            <DockTitle>Time</DockTitle>
            <FloatButton $w={34} $h={32} />
          </DockHeader>

          <TimeBody>
            <TimeRow>
              <QtButton $w={167}>Pause</QtButton>
              <FieldLabel $w={228} $ml={35}>Synchronization:</FieldLabel>
              <Combo $w={240} $ml={16}>
                Off
                <Arrow $dir="down" $s={7} />
              </Combo>
              <FieldLabel $w={144} $ml={34}>ROS Time:</FieldLabel>
              <TimeField $w={158} $ml={17} $end>090031.36</TimeField>
              <FieldLabel $w={184} $ml={14}>ROS Elapsed:</FieldLabel>
              <TimeField $w={158} $ml={16}>18.59</TimeField>
              <FieldLabel $w={143} $ml={15}>Wall Time:</FieldLabel>
              <TimeField $w={160} $ml={16} $end><ClipMark />090031.39</TimeField>
              <FieldLabel $w={185} $ml={14}>Wall Elapsed:</FieldLabel>
              <TimeField $w={159} $ml={15}>18.56</TimeField>
            </TimeRow>
            <TimeFoot>
              <QtButton $w={110} $h={49}>Reset</QtButton>
              <span>31 fps</span>
            </TimeFoot>
          </TimeBody>

          <BlackStrip />
          <Taskbar>
            <TaskLeft>
              <Arrow $dir="left" $s={6} $len={12} $c="#444" />
              <TaskPart $ml={15}>Workspace 1</TaskPart>
              <TaskArrow $dir="right" $s={6} $len={12} $c="#444" $ml={18} />
              <TaskPart $ml={26}>20 Nov, Wed 08:07:10</TaskPart>
              <TaskArrow $dir="left" $s={6} $len={12} $c="#444" $ml={30} />
              <TaskArrow $dir="right" $s={6} $len={12} $c="#444" $ml={25} />
            </TaskLeft>
            <TaskRight>
              <TaskIconText>RViz</TaskIconText>
              <TaskTitle>default.rviz* - RViz</TaskTitle>
            </TaskRight>
          </Taskbar>
        </RvizWindow>

        <VncBar>
          <VncLogo>
            <LogoNo>no</LogoNo>
            VNC
          </VncLogo>
          <VncButton><KeysIcon /></VncButton>
          <VncButton><ClipIcon /></VncButton>
          <VncButton><ScreenIcon /></VncButton>
          <VncButton $on><Gear size={40} color="#e2e2e2" /></VncButton>
          <VncButton><BrokenLinkIcon /></VncButton>
          <VncHandle>
            <HandleDots />
            <Arrow $dir="left" $s={6} $c="#e6e6e6" />
            <HandleDots />
          </VncHandle>
        </VncBar>

        <VncPanel>
          <PanelHeading>
            <Gear size={40} color="#e8e8e8" />
            Settings
          </PanelHeading>
          <CheckRow $off>
            <PanelCheck $state="checkedOff"><Tick size={20} /></PanelCheck>
            Shared Mode
          </CheckRow>
          <CheckRow>
            <PanelCheck $state="plain" />
            View Only
          </CheckRow>
          <PanelRule $mt={14} $mb={17} />
          <CheckRow $off>
            <PanelCheck $state="off" />
            Clip to Window
          </CheckRow>
          <ScaleLabel>Scaling Mode:</ScaleLabel>
          <ScaleSelect>Local Scaling</ScaleSelect>
          <PanelRule $mt={20} $mb={16} />
          <AdvancedRow>
            <AdvancedMark />
            Advanced
          </AdvancedRow>
        </VncPanel>
      </Desktop>
    </Page>
  );
}
